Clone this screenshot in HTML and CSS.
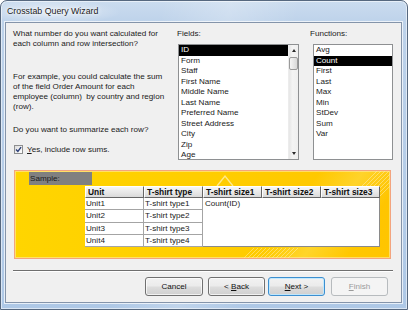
FILE: index.html
```html
<!DOCTYPE html>
<html>
<head>
<meta charset="utf-8">
<title>Crosstab Query Wizard</title>
<link rel="stylesheet" href="styles.css">
</head>
<body>
<div class="window">
  <div class="titlebar"><span class="title">Crosstab Query Wizard</span></div>
  <div class="client">
    <div class="top">
      <div class="leftcol">
        <p class="q1">What number do you want calculated for<br>each column and row intersection?</p>
        <p class="ex">For example, you could calculate the sum<br>of the field Order Amount for each<br>employee (column)&nbsp; by country and region<br>(row).</p>
        <p class="q2">Do you want to summarize each row?</p>
        <div class="check">
          <span class="cbox"><svg viewBox="0 0 7 7" width="7" height="7"><path d="M1 3.4 L2.9 5.4 L6.1 1.2" fill="none" stroke="#2c3f78" stroke-width="1.4"/></svg></span>
          <span class="cblabel"><u>Y</u>es, include row sums.</span>
        </div>
      </div>
      <div class="fieldscol">
        <div class="label">Fields:</div>
        <div class="listbox fields">
          <div class="items">
            <div class="item sel">ID</div>
            <div class="item">Form</div>
            <div class="item">Staff</div>
            <div class="item">First Name</div>
            <div class="item">Middle Name</div>
            <div class="item">Last Name</div>
            <div class="item">Preferred Name</div>
            <div class="item">Street Address</div>
            <div class="item">City</div>
            <div class="item">Zip</div>
            <div class="item">Age</div>
          </div>
          <div class="vscroll">
            <span class="arrbtn"><span class="tri up"></span></span>
            <span class="thumb"></span>
            <span class="track"></span>
            <span class="arrbtn"><span class="tri down"></span></span>
          </div>
        </div>
      </div>
      <div class="funccol">
        <div class="label">Functions:</div>
        <div class="listbox funcs">
          <div class="items">
            <div class="item">Avg</div>
            <div class="item sel">Count</div>
            <div class="item">First</div>
            <div class="item">Last</div>
            <div class="item">Max</div>
            <div class="item">Min</div>
            <div class="item">StDev</div>
            <div class="item">Sum</div>
            <div class="item">Var</div>
          </div>
        </div>
      </div>
    </div>

    <div class="sample">
      <div class="samplelabel">Sample:</div>
      <div class="grid">
        <div class="hd">Unit</div>
        <div class="hd">T-shirt type</div>
        <div class="hd">T-shirt size1</div>
        <div class="hd">T-shirt size2</div>
        <div class="hd">T-shirt size3</div>
        <div class="value">Count(ID)</div>
        <div class="cell">Unit1</div>
        <div class="cell">T-shirt type1</div>
        <div class="cell">Unit2</div>
        <div class="cell">T-shirt type2</div>
        <div class="cell">Unit3</div>
        <div class="cell">T-shirt type3</div>
        <div class="cell">Unit4</div>
        <div class="cell">T-shirt type4</div>
      </div>
    </div>

    <div class="sep"></div>

    <div class="buttons">
      <div class="btn cancel">Cancel</div>
      <div class="btn back">&lt; <u>B</u>ack</div>
      <div class="btn next"><u>N</u>ext &gt;</div>
      <div class="btn finish disabled"><u>F</u>inish</div>
    </div>
  </div>
</div>
</body>
</html>
```

FILE: styles.css
```css
* { box-sizing: border-box; }
html, body { margin: 0; padding: 0; }
body {
  width: 408px;
  height: 310px;
  overflow: hidden;
  background: #ffffff;
  font-family: "Liberation Sans", Arial, sans-serif;
  font-size: 8.1px;
  color: #1a1a1a;
}
p { margin: 0; }
u { text-decoration: underline; text-underline-offset: 1px; }

.window {
  width: 408px;
  height: 310px;
  display: flex;
  flex-direction: column;
  border: 1px solid #56687f;
  border-radius: 7px 7px 0 0;
  box-shadow: inset 0 0 0 1px rgba(255,255,255,0.55);
  background:
    radial-gradient(ellipse 70px 12px at 50px 11px, rgba(255,255,255,0.55), rgba(255,255,255,0) 100%),
    linear-gradient(100deg, rgba(255,255,255,0) 35%, rgba(255,255,255,0.22) 50%, rgba(255,255,255,0) 65%),
    linear-gradient(180deg, #cbdcef 0px, #bdd2ea 22px, #aec8e6 100%);
}

.titlebar {
  height: 21px;
  flex: none;
  padding-left: 6px;
  line-height: 21px;
}
.title {
  font-size: 8.8px;
  color: #1b1b1b;
  text-shadow: 0 0 5px rgba(255,255,255,0.95), 0 0 2px rgba(255,255,255,0.9);
}

.client {
  flex: 1;
  margin: 0 5px 6px 4px;
  border: 1px solid #8494aa;
  background: #f0f0f0;
  box-shadow: 0 0 0 1px rgba(255,255,255,0.7);
  display: flex;
  flex-direction: column;
}

/* ---------- top area ---------- */
.top {
  display: flex;
  height: 137px;
  padding: 5.5px 0 0 7px;
  flex: none;
}
.leftcol {
  width: 164px;
  line-height: 10px;
  white-space: nowrap;
}
.q1 { height: 20px; }
.ex { margin-top: 23.2px; }
.q2 { margin-top: 13.3px; }
.check {
  margin-top: 10px;
  height: 10px;
  display: flex;
  align-items: center;
  padding-left: 1px;
}
.cbox {
  width: 9px;
  height: 9px;
  border: 1px solid #8e8f8f;
  background: linear-gradient(135deg, #dcdcdc, #f6f6f6 70%, #ffffff);
  display: flex;
  align-items: center;
  justify-content: center;
  flex: none;
}
.cbox svg { display: block; }
.cblabel { margin-left: 4px; }

.label {
  line-height: 10px;
  height: 10px;
  margin-bottom: 5.5px;
}
.fieldscol { width: 122px; }
.funccol { width: 83px; margin-left: 11px; }

.listbox {
  height: 116px;
  border: 1px solid #8e9092;
  background: #ffffff;
  display: flex;
}
.fields { width: 121px; margin-left: 1px; }
.funcs { width: 80px; margin-left: 3px; }

.items { flex: 1; min-width: 0; }
.item {
  height: 10.5px;
  line-height: 10.5px;
  padding-left: 2px;
  white-space: nowrap;
}
.item.sel {
  background: #000000;
  color: #ffffff;
}

.vscroll {
  width: 10px;
  flex: none;
  display: flex;
  flex-direction: column;
  background: linear-gradient(90deg, #e6e6e6, #f4f4f4 40%, #efefef);
  border-left: 1px solid #ececec;
}
.arrbtn {
  height: 11px;
  display: flex;
  align-items: center;
  justify-content: center;
  flex: none;
}
.tri { width: 0; height: 0; border-left: 2.5px solid transparent; border-right: 2.5px solid transparent; }
.tri.up { border-bottom: 3px solid #2a2a2a; }
.tri.down { border-top: 3px solid #2a2a2a; }
.thumb {
  height: 13px;
  margin: 1px 0 0 0;
  border: 1px solid #9a9a9a;
  border-radius: 2px;
  background: linear-gradient(90deg, #f5f5f5, #e4e4e4 60%, #d8d8d8);
  flex: none;
}
.track { flex: 1; }

/* ---------- sample ---------- */
.sample {
  flex: none;
  margin: 10px 0 0 8px;
  width: 377px;
  height: 89px;
  border: 1px solid #f3a47f;
  padding: 1px 0 0 14px;
  box-shadow: inset 0 0 0 1px rgba(255,235,170,0.6);
  background:
    url("data:image/svg+xml,%3Csvg xmlns='http://www.w3.org/2000/svg' width='375' height='87'%3E%3Cpath d='M202 15 L210 5 L218 15' fill='none' stroke='%23ffe98a' stroke-width='1.4'/%3E%3Cg stroke='%23ffffff' stroke-opacity='0.35' stroke-width='1'%3E%3Cpath d='M336 26 L362 0 M340 26 L366 0 M344 26 L370 0 M348 26 L374 0 M352 26 L378 0 M356 26 L382 0 M360 26 L386 0 M364 26 L390 0'/%3E%3Cpath d='M229 87 L239 77 M233 87 L243 77 M237 87 L247 77 M241 87 L251 77 M245 87 L255 77 M249 87 L259 77 M253 87 L263 77 M257 87 L267 77 M261 87 L271 77 M265 87 L275 77 M269 87 L279 77 M273 87 L283 77'/%3E%3C/g%3E%3C/svg%3E") no-repeat 0 0,
    linear-gradient(125deg, rgba(255,255,255,0) 70%, rgba(255,235,120,0.35) 80%, rgba(255,255,255,0) 90%),
    linear-gradient(90deg, #ffd500 0%, #ffcd00 55%, #ffc500 100%);
}
.samplelabel {
  width: 63px;
  height: 13px;
  line-height: 13px;
  padding-left: 1px;
  background: #808080;
  color: #1c1c1c;
}
.grid {
  margin: 1px 0 0 56px;
  display: grid;
  grid-template-columns: repeat(5, 59px);
  grid-template-rows: 12px repeat(4, 12.25px);
  width: 295px;
}
.hd {
  background: linear-gradient(180deg, #f6f6f6, #e6e6e6 60%, #dadada);
  border-top: 1px solid #ffffff;
  border-left: 1px solid #ffffff;
  border-right: 1px solid #666666;
  border-bottom: 1px solid #666666;
  font-weight: bold;
  font-size: 8.4px;
  line-height: 10px;
  padding-left: 2px;
  color: #111111;
  white-space: nowrap;
  overflow: hidden;
}
.cell {
  background: #ffffff;
  border-right: 1px solid #a4a4a4;
  border-bottom: 1px solid #a4a4a4;
  line-height: 11.5px;
  padding-left: 1px;
  white-space: nowrap;
}
.value {
  grid-column: 3 / 6;
  grid-row: 2 / 6;
  background: #ffffff;
  border-right: 1px solid #8a8a8a;
  border-bottom: 1px solid #8a8a8a;
  line-height: 12px;
  padding-left: 2px;
}

/* ---------- separator & buttons ---------- */
.sep {
  flex: none;
  margin: 11px 0 0 7px;
  width: 380px;
  height: 2px;
  border-top: 1px solid #6f6f6f;
  border-bottom: 1px solid #ffffff;
}
.buttons {
  flex: none;
  display: flex;
  justify-content: flex-end;
  margin-top: 5px;
  padding-right: 13px;
}
.btn {
  height: 19px;
  width: 57px;
  line-height: 17px;
  text-align: center;
  border: 1px solid #707070;
  border-radius: 3px;
  color: #111111;
  background: linear-gradient(180deg, #f2f2f2 0%, #ebebeb 48%, #dddddd 52%, #cfcfcf 100%);
  box-shadow: inset 0 0 0 1px rgba(255,255,255,0.7);
}
.cancel { width: 58px; }
.back { margin-left: 5px; }
.next {
  margin-left: 3px;
  border-color: #3c8fd0;
  box-shadow: inset 0 0 0 1px rgba(190,232,255,0.9);
}
.finish { margin-left: 6px; }
.btn.disabled {
  border-color: #b7bbbe;
  background: #f4f4f4;
  color: #9a9a9a;
  box-shadow: none;
}
```
